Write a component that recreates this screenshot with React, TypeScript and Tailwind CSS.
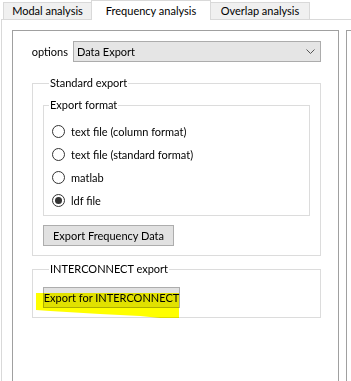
import React from "react";

function Radio({ label, checked }: { label: string; checked?: boolean }) {
  return (
    <div className="flex items-center h-[23px] pl-[8px]">
      <div className="w-[13px] h-[13px] rounded-full border border-[#333333] bg-white flex items-center justify-center shrink-0">
        {checked && <div className="w-[7px] h-[7px] rounded-full bg-[#333333]" />}
      </div>
      <span className="ml-[6px] leading-[16px] whitespace-nowrap">{label}</span>
    </div>
  );
}

export default function App() {
  return (
    <div className="w-[351px] h-[381px] bg-white overflow-hidden relative font-['Lato',sans-serif] text-[11px] leading-[16px] text-black whitespace-nowrap">
      {/* Tabs */}
      <div className="flex items-end h-[19px] pl-[3px] relative z-10">
        <div className="h-[17px] w-[89px] bg-[#f0f0f0] border border-b-0 border-[#d9d9d9] flex items-center justify-center">
          Modal analysis
        </div>
        <div className="h-[20px] w-[120px] -ml-px bg-white border border-b-0 border-[#d9d9d9] -mb-px flex items-start justify-center pt-[2px]">
          Frequency analysis
        </div>
        <div className="h-[17px] w-[100px] -ml-px bg-[#f0f0f0] border border-b-0 border-[#d9d9d9] flex items-center justify-center">
          Overlap analysis
        </div>
      </div>
      {/* Pane */}
      <div className="ml-[1px] h-[400px] border-l border-t border-[#d9d9d9] flex pt-[10px] pl-[10px] gap-[7px]">
        <div className="w-[327px] h-[380px] shrink-0 border border-[#a0a0a0] flex flex-col">
          {/* options row */}
          <div className="flex items-center mt-[10px]">
            <span className="w-[55px] text-right">options</span>
            <div className="ml-[5px] w-[248px] h-[21px] bg-[#e5e5e5] border border-[#acacac] flex items-center justify-between pl-[3px] pr-[5px]">
              <span>Data Export</span>
              <svg width="9" height="5" viewBox="0 0 9 5" className="block">
                <path d="M0.5 0.5 L4.5 4.5 L8.5 0.5" fill="none" stroke="#555" strokeWidth="1" />
              </svg>
            </div>
          </div>
          {/* Standard export */}
          <fieldset className="ml-[19px] mt-[13px] w-[289px] border border-[#dcdcdc] pl-[10px] pb-[9px]">
            <legend className="ml-[6px] px-[1px] leading-[16px]">Standard export</legend>
            <fieldset className="mt-[6px] w-[267px] border border-[#dcdcdc] pb-[3px]">
              <legend className="ml-[5px] px-[1px] leading-[16px]">Export format</legend>
              <div className="mt-[7px] flex flex-col">
                <Radio label="text file (column format)" />
                <Radio label="text file (standard format)" />
                <Radio label="matlab" />
                <Radio label="ldf file" checked />
              </div>
            </fieldset>
            <div className="mt-[9px] w-[131px] h-[21px] bg-[#e1e1e1] border border-[#adadad] flex items-center justify-center">
              Export Frequency Data
            </div>
          </fieldset>
          {/* INTERCONNECT export */}
          <fieldset className="ml-[19px] mt-[5px] w-[289px] border border-[#dcdcdc] pl-[10px] pb-[9px]">
            <legend className="ml-[6px] px-[1px] leading-[16px]">INTERCONNECT export</legend>
            <div className="mt-[10px] w-[137px] h-[21px] bg-[#e1e1e1] border border-[#adadad] flex items-center justify-center">
              Export for INTERCONNECT
            </div>
          </fieldset>
        </div>
        <div className="flex-1 h-[380px] border-l border-t border-[#a0a0a0]" />
      </div>
      {/* Highlighter mark */}
      <svg
        className="absolute left-[35px] top-[292px] mix-blend-multiply pointer-events-none"
        width="146"
        height="27"
        viewBox="0 0 146 27"
      >
        <polygon
          points="1,1 144,1 144,26 125,26 105,24 65,22 15,19 1,18"
          fill="#ffff00"
        />
      </svg>
    </div>
  );
}
